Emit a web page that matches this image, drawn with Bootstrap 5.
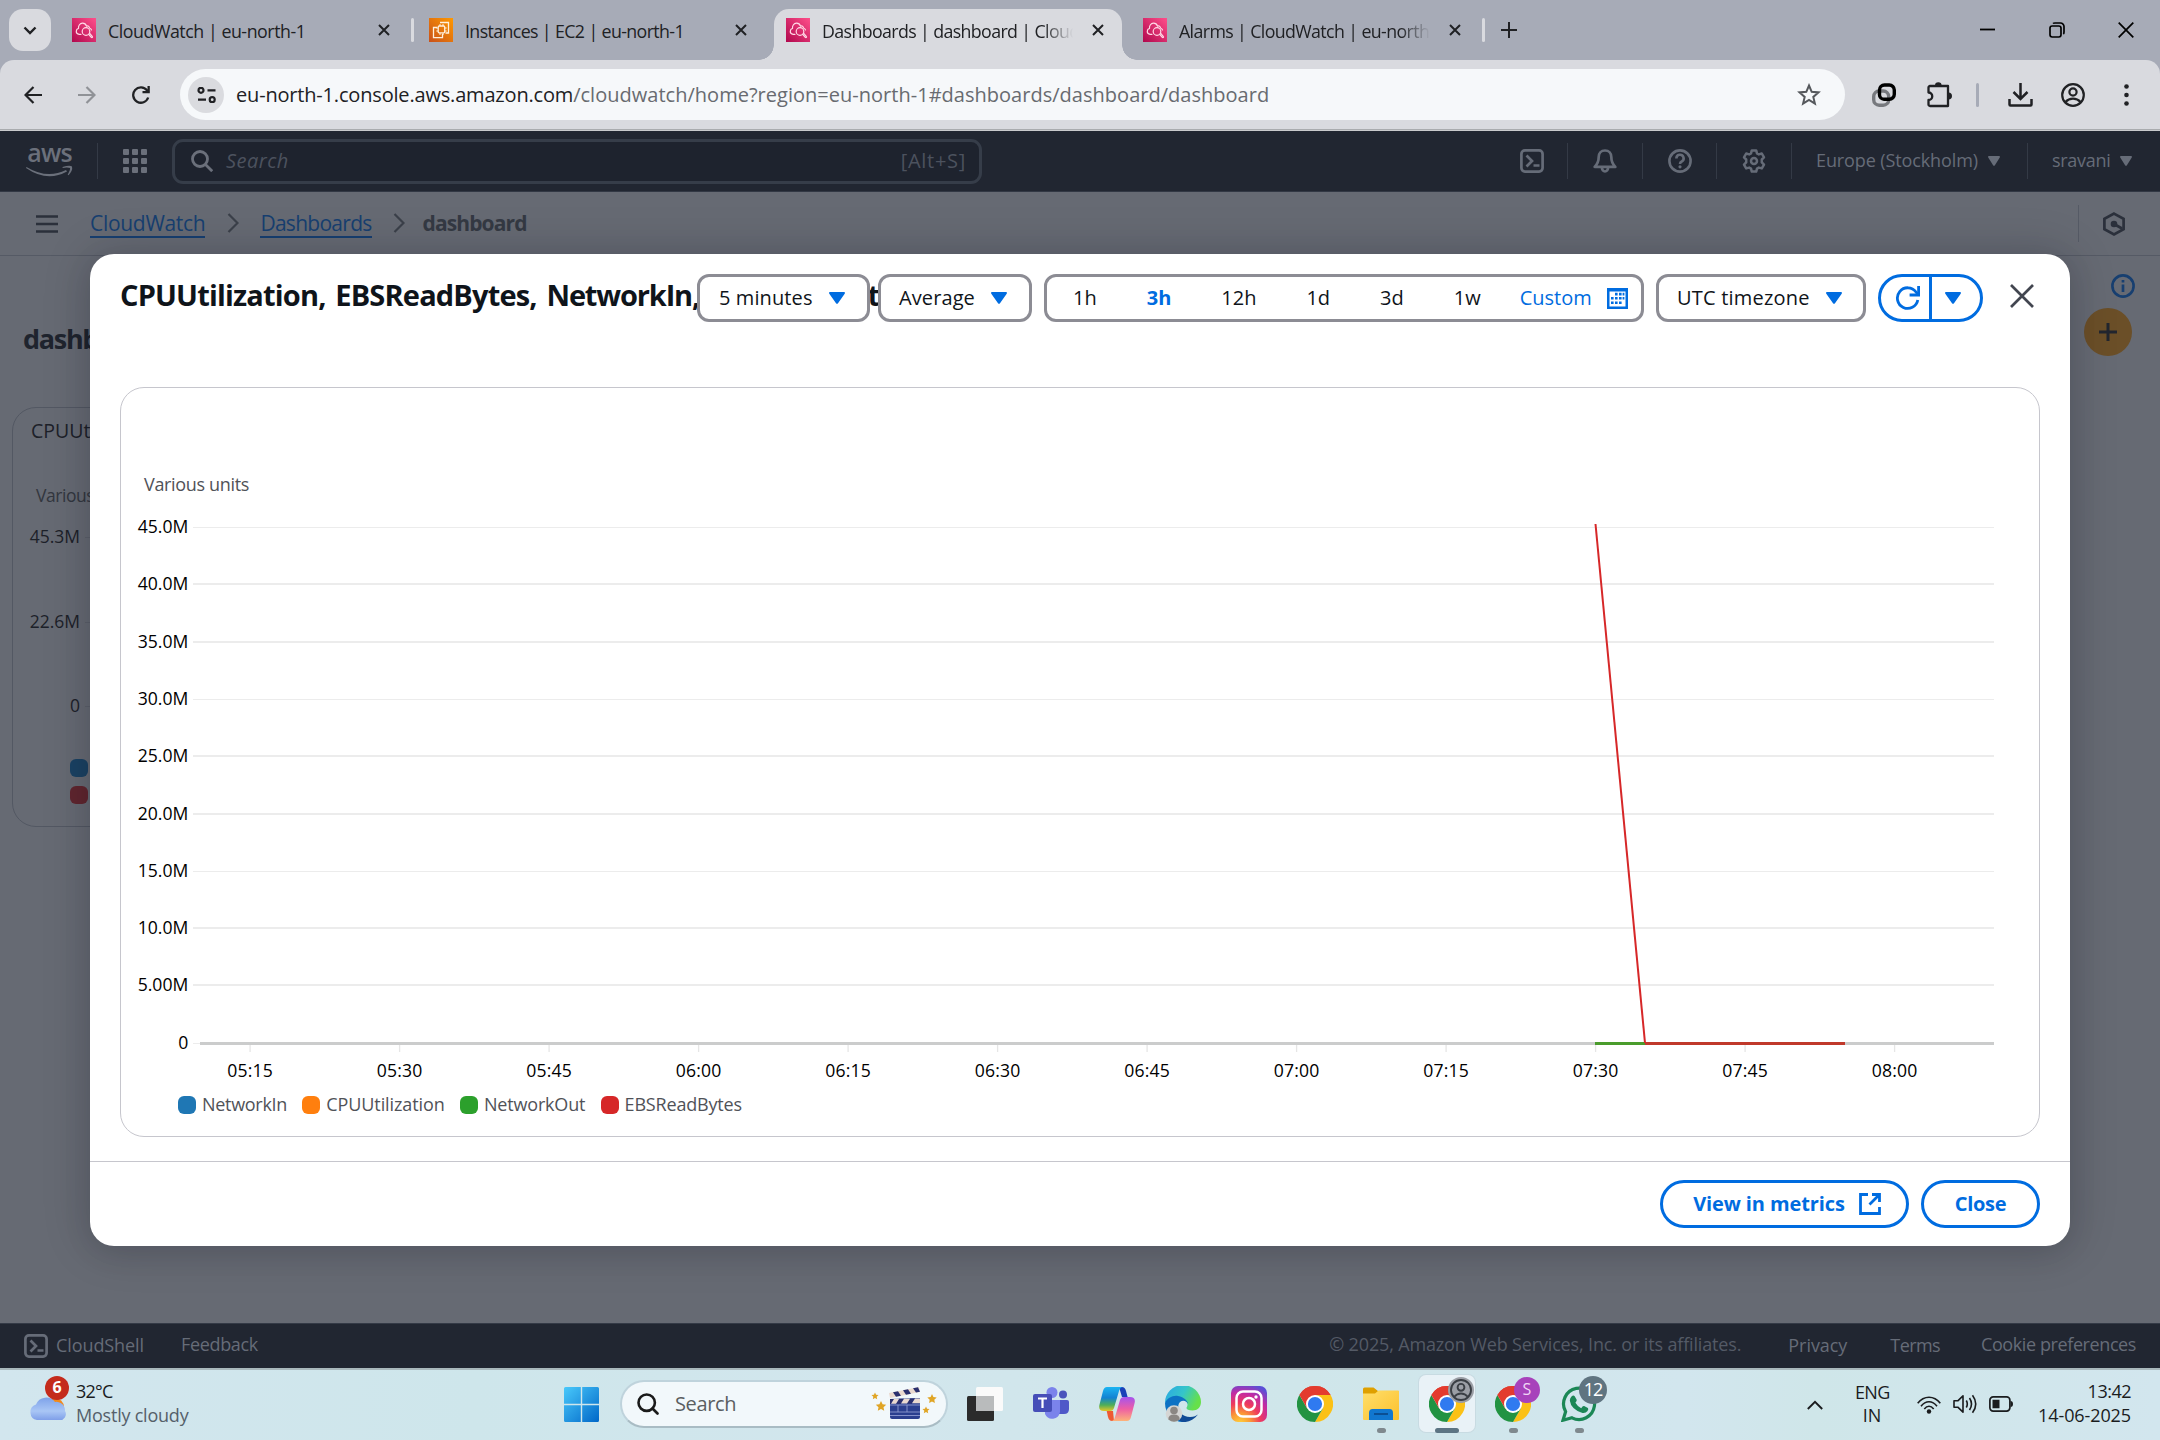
<!DOCTYPE html>
<html lang="en">
<head>
<meta charset="utf-8">
<title>Dashboards | dashboard | CloudWatch</title>
<meta name="viewport" content="width=device-width, initial-scale=1">
<link href="https://cdn.jsdelivr.net/npm/bootstrap@5.3.0/dist/css/bootstrap.min.css" rel="stylesheet">
<style>
body{width:2160px;height:1440px;overflow:hidden;font-family:"Open Sans","Noto Sans",sans-serif;font-size:20px;line-height:1.2;color:#0f141a;background:#666a73}
svg{display:block;flex:none}
.tx{white-space:nowrap;flex:none}
/* browser chrome */
.tabstrip{height:60px;background:#a7abb7;padding-left:9px}
.tab-menu{width:42px;height:42px;border-radius:14px;background:#d9dadf;margin-right:9px}
.tab-item{width:348px;height:51px;padding:0 18px 9px 12px;margin-top:9px;font-size:17.8px;letter-spacing:-.5px;color:#202124;flex:none}
.tab-item.active{background:#d9dadf;border-radius:15px 15px 0 0;position:relative}
.tab-item.active::before,.tab-item.active::after{content:"";position:absolute;bottom:0;width:15px;height:15px}
.tab-item.active::before{left:-15px;background:radial-gradient(circle at 0 0,transparent 14.5px,#d9dadf 15px)}
.tab-item.active::after{right:-15px;background:radial-gradient(circle at 100% 0,transparent 14.5px,#d9dadf 15px)}
.tab-title{width:251px;overflow:hidden;line-height:30px;margin:2px 0 0 12px;padding-right:2px}
.tab-title.fade-end{-webkit-mask-image:linear-gradient(90deg,#000 88%,transparent);mask-image:linear-gradient(90deg,#000 88%,transparent)}
.tab-gap{width:9px;flex:none}
.tab-gap.bar::after{content:"";display:block;width:3px;height:24px;margin-left:3px;border-radius:2px;background:#d9dadf}
.win-btn{width:69px}
.toolbar-row{height:69px;background:linear-gradient(#a7abb7,#a7abb7) top/100% 14px no-repeat}
.toolbar-in{height:69px;background:#d9dadf;border-radius:14px 14px 0 0;padding-left:24px}
.omnibox{width:1665px;height:51px;border-radius:26px;background:#f6f8fa;padding:0 24px 0 8px;color:#202124}
.site-chip{width:36px;height:36px;border-radius:50%;background:#dadbdf;margin-right:12px}
.url-path{color:#686b70}
.chrome-edge{height:2px;background:#c9cacd;border-top:1px solid #a9abae}
/* console header */
.aws-nav{height:61px;background:#212631;border-bottom:1px solid #323844;padding-left:26px;color:#666c78;font-size:18px}
.aws-sep{width:1px;height:36px;background:#343a46;flex:none}
.aws-search{width:810px;height:45px;border:3px solid #363d49;border-radius:11px;background:#1e232e;padding:0 13px 0 16px;font-size:20px;color:#4c525e}
.nav-cell{width:73.6px}
.crumbs{height:64px;border-bottom:1px solid #555a65;padding-left:36px;font-size:21px}
.crumb-link{color:#173f70;border-bottom:2px solid #173f70;line-height:25px;margin-top:1px}
.crumb-now{color:#343943;font-weight:700;letter-spacing:-.89px}
.dash-area{height:1067px;overflow:hidden}
.dash-title{font-size:27px;font-weight:700;color:#1f242e;letter-spacing:-1.3px}
.add-btn{width:48px;height:48px;border-radius:50%;background:#6b4f28}
.widget{width:700px;height:420px;margin:51px 0 0 12px;border:1px solid #535863;border-radius:24px;color:#1d2129}
/* dialog */
.dlg{position:absolute;left:90px;top:254px;width:1980px;height:992px;border-radius:24px;background:#fff;box-shadow:0 0 46px 4px rgba(0,7,22,.16),0 6px 30px rgba(0,7,22,.08)}
.dlg-head{height:133px;padding:21px 31px 0 30px}
.dlg-title{font-size:29px;font-weight:700;letter-spacing:-.83px;word-spacing:3px;line-height:39px}
.dlg-title .tight{letter-spacing:-1.15px}
.dlg-tools{position:absolute;right:36px;top:20px}
.pick{height:48px;border:3px solid #8c8c94;border-radius:12px;background:#fff;padding-left:19px}
.range{width:600px;padding:0 0 0 26px;gap:50px}
.refresh{width:105px;height:48px;border:3px solid #006ce0;border-radius:24px;background:#fff}
.chart-card{margin:0 30px;height:750px;border:1px solid #c6c6cd;border-radius:24px}
.chart-card text{font-family:"Open Sans","Noto Sans",sans-serif;font-size:17.6px;fill:#000}
.legend-row{padding-left:57px;gap:15.3px;font-size:18px;color:#505258;margin-top:2px}
.dot{width:18px;height:18px;border-radius:6px;flex:none;margin-right:6px}
.dlg-foot{margin-top:24px;border-top:1px solid #c6c6cd;padding:18px 30px 0 0;gap:12px}
.pill{height:48px;border:3px solid #006ce0;border-radius:24px;color:#006ce0;font-weight:700;font-size:20px}
/* footer + taskbar */
.aws-foot{height:45px;background:#212631;border-top:1px solid #343a46;padding:0 24px;font-size:18px;color:#666c78}
.taskbar{height:72px;border-top:2px solid #a9b8bc;background:linear-gradient(90deg,#d2e6ee,#cee6eb 22%,#d2e6ed 40%,#cfe6ea 60%,#d2e6ee 78%,#cfe6e9 84%,#d2e6ee);font-size:18px;color:#1a1c1e}
.weather{width:564px;padding-left:29px}
.tb-search{width:328px;height:48px;border-radius:24px;background:#f2f8fb;border:2px solid #bfd3dc;border-bottom-color:#a9bcc4;margin-left:21px;padding:0 9px 0 15px;font-size:20px;color:#5a5e61}
.app{width:66px;height:70px;position:relative;padding-bottom:2px}
.run::after{content:"";position:absolute;left:28.5px;bottom:7px;width:9px;height:5px;border-radius:3px;background:#7f898e}
.app.on::before{content:"";position:absolute;left:5px;top:5px;width:56px;height:57px;border-radius:7px;background:#e9f2f7;box-shadow:0 0 0 1px #c8dbe2}
.app.on::after{left:21px;width:24px;background:#5c7483}
.app svg{position:relative}
.tag{position:absolute;width:26px;height:26px;border-radius:50%;left:34px;top:7px;font-size:16px}
.two-line{line-height:24px;padding-bottom:5px}
</style>
<script src="https://cdn.jsdelivr.net/npm/bootstrap@5.3.0/dist/js/bootstrap.bundle.min.js"></script>
</head>
<body class="d-flex flex-column">
<svg width="0" height="0" class="position-absolute">
<defs>
<linearGradient id="gPink" x1="0" y1="1" x2="1" y2="0"><stop stop-color="#b0084d"/><stop offset="1" stop-color="#ff4f8b"/></linearGradient>
<linearGradient id="gOr" x1="0" y1="1" x2="1" y2="0"><stop stop-color="#c8511b"/><stop offset="1" stop-color="#f90"/></linearGradient>
<symbol id="cw" viewBox="0 0 24 24"><path fill="url(#gPink)" d="M0 0h24v24H0z"/><g fill="none" stroke="#ffd9e6" stroke-width="1.2" stroke-linecap="round"><path d="M9 16.3H7.2c-2-.3-3-1.700-2.900-3.100 0-1.500 1-2.500 2.200-2.800-.3-3 1.500-5 3.900-5.200 2-.1 3.400 1 4.100 2.900 1.600-.6 2.800.3 3 1.900 1 .3 1.700 1 2 2"/><circle cx="14" cy="13.500" r="3.800"/><path d="M16.700 16.300l2.600 3.100c.8.800 1.700-.3 1-1l-2.600-3"/></g></symbol>
<symbol id="x" viewBox="0 0 12 12"><path d="M1 1l10 10M11 1L1 11" stroke="currentColor" stroke-width="2" fill="none"/></symbol>
<symbol id="tri" viewBox="0 0 16 12"><path d="M1.200 0h13.600c1 0 1.500.9.900 1.700L9 11.300c-.5.7-1.500.7-2 0L.3 1.700C-.3.900.2 0 1.200 0z" fill="currentColor"/></symbol>
<symbol id="shell" viewBox="0 0 24 24"><g fill="none" stroke="currentColor" stroke-width="2.700"><rect x="1.400" y="1.400" width="21.200" height="21.200" rx="3.500"/><path d="M6.500 6.500l5.500 5.500-5.500 5.500M13.500 16.500h6"/></g></symbol>
<symbol id="chr" viewBox="0 0 36 36"><path d="M18 18L2.410 9A18 18 0 0 1 33.590 9z" fill="#e33b2e"/><path d="M18 9H33.590A18 18 0 0 1 18 36L25.800 22.500z" fill="#fbc116"/><path d="M2.410 9L10.200 22.500 25.800 22.500 18 36A18 18 0 0 1 2.410 9z" fill="#229342"/><path d="M2.410 9A18 18 0 0 1 33.590 9H18L10.200 22.500z" fill="#e33b2e"/><circle cx="18" cy="18" r="9" fill="#fff"/><circle cx="18" cy="18" r="7.100" fill="#2f7af0"/></symbol>
</defs></svg>

<!-- Tab strip -->
<div class="tabstrip d-flex align-items-center flex-shrink-0">
  <div class="tab-menu d-flex align-items-center justify-content-center"><svg width="14" height="9" viewBox="0 0 14 9"><path d="M1.500 1.500L7 7l5.500-5.500" fill="none" stroke="#202124" stroke-width="2.400"/></svg></div>
  <div class="tab-item d-flex align-items-center"><svg width="24" height="24"><use href="#cw"/></svg><div class="tab-title tx" style="letter-spacing:-.45px">CloudWatch | eu-north-1</div><svg class="ms-auto" width="12" height="12"><use href="#x"/></svg></div>
  <div class="tab-gap bar"></div>
  <div class="tab-item d-flex align-items-center"><svg width="24" height="24" viewBox="0 0 24 24"><path fill="url(#gOr)" d="M0 0h24v24H0z"/><g fill="none" stroke="#fff1de" stroke-width="1.300"><path d="M11 4.500h8.500V15h-3M8 9.500H4.500v10.200h9V16"/><rect x="9.200" y="8" width="6.500" height="6.800" rx="1"/><path d="M11 6v2M14 6v2M11 15v2M14 15v2M7.300 10h2M7.300 13h2M15.700 10h2M15.700 13h2" stroke-width="1"/></g></svg><div class="tab-title tx" style="letter-spacing:-.62px">Instances | EC2 | eu-north-1</div><svg class="ms-auto" width="12" height="12"><use href="#x"/></svg></div>
  <div class="tab-gap"></div>
  <div class="tab-item active d-flex align-items-center"><svg width="24" height="24"><use href="#cw"/></svg><div class="tab-title tx fade-end" style="letter-spacing:-.62px">Dashboards | dashboard | CloudW</div><svg class="ms-auto" width="12" height="12"><use href="#x"/></svg></div>
  <div class="tab-gap"></div>
  <div class="tab-item d-flex align-items-center"><svg width="24" height="24"><use href="#cw"/></svg><div class="tab-title tx fade-end" style="letter-spacing:-.62px">Alarms | CloudWatch | eu-north-1</div><svg class="ms-auto" width="12" height="12"><use href="#x"/></svg></div>
  <div class="tab-gap bar"></div>
  <svg style="margin-left:13px" width="16" height="16" viewBox="0 0 16 16"><path d="M8 0v16M0 8h16" stroke="#202124" stroke-width="2"/></svg>
  <div class="d-flex ms-auto text-black">
    <div class="win-btn d-flex justify-content-center align-items-center"><svg width="15" height="16" viewBox="0 0 15 16"><path d="M0 7.500h15" stroke="#000" stroke-width="1.800"/></svg></div>
    <div class="win-btn d-flex justify-content-center align-items-center"><svg width="16" height="16" viewBox="0 0 16 16"><g fill="none" stroke="#000" stroke-width="1.700"><rect x="1" y="4" width="11" height="11" rx="2.200"/><path d="M4 1.500Q4.500 1 6 1h5.500A3.500 3.500 0 0 1 15 4.500V10q0 1.500-.7 2"/></g></svg></div>
    <div class="win-btn d-flex justify-content-center align-items-center"><svg width="16" height="16" viewBox="0 0 16 16"><path d="M.7.7l14.600 14.600M15.300.7L.7 15.300" stroke="#000" stroke-width="1.700"/></svg></div>
  </div>
</div>

<!-- Toolbar -->
<div class="toolbar-row flex-shrink-0"><div class="toolbar-in d-flex align-items-center">
  <svg width="18" height="18" viewBox="0 0 18 18"><path d="M18 9H2M9.500 1L1.500 9l8 8" fill="none" stroke="#202124" stroke-width="2.200"/></svg>
  <svg style="margin-left:36px" width="18" height="18" viewBox="0 0 18 18"><path d="M0 9h16M8.500 1l8 8-8 8" fill="none" stroke="#909297" stroke-width="2.200"/></svg>
  <svg style="margin-left:36px" width="18" height="18" viewBox="0 0 18 18"><path d="M16.200 11.500A7.700 7.700 0 1 1 15 4.300l1.500 1.900" fill="none" stroke="#202124" stroke-width="2.300"/><path d="M17.800 0v7.300h-7.300V5h5V0z" fill="#202124"/></svg>
  <div class="omnibox d-flex align-items-center" style="margin-left:30px">
    <div class="site-chip d-flex align-items-center justify-content-center"><svg width="19" height="16" viewBox="0 0 19 16"><g fill="none" stroke="#202124" stroke-width="2.200"><circle cx="4" cy="3.300" r="2.500"/><path d="M10.500 3.300h8M1 12.700h8"/><circle cx="15.200" cy="12.700" r="2.500"/></g></svg></div>
    <span class="tx" style="letter-spacing:-.18px">eu-north-1.console.aws.amazon.com</span><span class="tx url-path" style="letter-spacing:.02px">/cloudwatch/home?region=eu-north-1#dashboards/dashboard/dashboard</span>
    <svg class="ms-auto" width="24" height="23" viewBox="0 0 24 23"><path d="M12 2.500l2.700 6.300 6.800.6-5.200 4.500 1.600 6.700-5.900-3.600-5.900 3.600 1.600-6.700L2.500 9.400l6.800-.6z" fill="none" stroke="#55585c" stroke-width="2"/></svg>
  </div>
  <svg style="margin-left:27px" width="24" height="24" viewBox="0 0 24 24"><g fill="none" stroke-width="3.400"><rect x="1.700" y="8" width="15" height="14.200" rx="5.500" stroke="#77797e"/><path d="M13 16.200H12a4.500 4.500 0 0 1-4.500-4.500V7A5 5 0 0 1 12.500 2H17.300A5 5 0 0 1 22.300 7V11.200a5 5 0 0 1-5 5H12.500" stroke="#000"/></g></svg>
  <svg style="margin-left:31px" width="26" height="26" viewBox="0 0 26 26"><path d="M3 4h18v20H3a1.500 1.500 0 0 1-1.500-1.500V18a3.600 3.600 0 0 0 0-7.500V5.500A1.500 1.500 0 0 1 3 4z" fill="none" stroke="#202124" stroke-width="2.300" stroke-linejoin="round"/><path d="M8 3.500a3.300 3.300 0 0 1 6.600 0zM21.500 10.500a3.500 3.500 0 0 1 0 7z" fill="#202124"/></svg>
  <div style="width:3px;height:24px;background:#a7abb7;margin:0 29px 0 23px;border-radius:2px"></div>
  <svg width="25" height="24" viewBox="0 0 25 24"><path d="M12.500 0v15M5.500 9l7 7 7-7M1.500 16v5.500q0 1 1 1h20q1 0 1-1V16" fill="none" stroke="#202124" stroke-width="2.500"/></svg>
  <svg style="margin-left:28px" width="24" height="24" viewBox="0 0 24 24"><g fill="none" stroke="#202124" stroke-width="2.200"><circle cx="12" cy="12" r="10.800"/><circle cx="12" cy="9" r="3.600"/><path d="M4.500 19q3-3.300 7.500-3.300t7.500 3.300"/></g></svg>
  <svg style="margin-left:39px" width="5" height="22" viewBox="0 0 5 22"><g fill="#202124"><circle cx="2.500" cy="2.500" r="2.300"/><circle cx="2.500" cy="11" r="2.300"/><circle cx="2.500" cy="19.500" r="2.300"/></g></svg>
</div></div>
<div class="chrome-edge flex-shrink-0"></div>

<!-- Console navigation -->
<div class="aws-nav d-flex align-items-center flex-shrink-0">
  <div style="width:47px" class="d-flex flex-column align-items-center">
    <span class="tx" style="font-size:25px;line-height:18px;letter-spacing:-.9px;font-weight:600;color:#6b707b;margin-top:-2px">aws</span>
    <svg width="47" height="13" viewBox="0 0 47 13" style="margin-top:3px"><path d="M.5 3Q21 15.500 40 6l1 1.500Q21 18.500 0 4z" fill="#6b707b"/><path d="M36.500 3Q44 .8 46 2.500 47 6.500 42.500 11.200l-.8-.5Q44.500 5.500 44 4 41 3 36.700 4z" fill="#6b707b"/></svg>
  </div>
  <div class="aws-sep" style="margin:0 25px 0 24px"></div>
  <svg width="24" height="24" viewBox="0 0 24 24"><g fill="#6b707b"><rect width="6" height="6" rx="1"/><rect x="9" width="6" height="6" rx="1"/><rect x="18" width="6" height="6" rx="1"/><rect y="9" width="6" height="6" rx="1"/><rect x="9" y="9" width="6" height="6" rx="1"/><rect x="18" y="9" width="6" height="6" rx="1"/><rect y="18" width="6" height="6" rx="1"/><rect x="9" y="18" width="6" height="6" rx="1"/><rect x="18" y="18" width="6" height="6" rx="1"/></g></svg>
  <div class="aws-search d-flex align-items-center" style="margin-left:25px">
    <svg width="22" height="22" viewBox="0 0 22 22"><g fill="none" stroke="#6b707b" stroke-width="2.800"><circle cx="9" cy="9" r="7.500"/><path d="M14.200 14.200l7 7"/></g></svg>
    <span class="tx fst-italic" style="margin-left:13px;letter-spacing:.5px">Search</span>
    <span class="tx ms-auto" style="letter-spacing:.7px">[Alt+S]</span>
  </div>
  <div class="d-flex align-items-center ms-auto">
    <div class="nav-cell d-flex justify-content-center ps-1"><svg width="24" height="24"><use href="#shell"/></svg></div>
    <div class="aws-sep"></div>
    <div class="nav-cell d-flex justify-content-center"><svg width="24" height="24" viewBox="0 0 24 24"><g fill="none" stroke="currentColor" stroke-width="2.700"><path d="M12 1.500c-4 0-6.300 2.800-6.300 6.500 0 5-1.700 7.500-4 9.900h20.600c-2.300-2.400-4-4.900-4-9.900 0-3.700-2.300-6.500-6.300-6.500z" stroke-linejoin="round"/><path d="M9 19a3 3.500 0 0 0 6 0"/></g></svg></div>
    <div class="aws-sep"></div>
    <div class="nav-cell d-flex justify-content-center"><svg width="24" height="24" viewBox="0 0 24 24"><g fill="none" stroke="currentColor" stroke-width="2.600"><circle cx="12" cy="12" r="10.600"/><path d="M8.400 9.500A3.600 3.600 0 1 1 13.700 12.500Q12 13.300 12 15"/></g><circle cx="12" cy="17.800" r="1.600" fill="currentColor"/></svg></div>
    <div class="aws-sep"></div>
    <div class="nav-cell d-flex justify-content-center"><svg width="24" height="24" viewBox="0 0 24 24"><g fill="none" stroke="currentColor" stroke-width="2.500" stroke-linejoin="round"><path d="M9.800 1.400h4.400l.8 3 1.800 1 3-.9 2.200 3.900-2.200 2.100v2.900l2.200 2.200-2.200 3.800-3-.8-1.800 1-.8 3H9.800l-.8-3-1.800-1-3 .8L2 15.600l2.200-2.200v-2.900L2 8.400l2.200-3.900 3 .9 1.800-1z"/><circle cx="12" cy="12" r="3"/></g></svg></div>
    <div class="aws-sep"></div>
    <div class="d-flex align-items-center" style="width:235px;padding-left:24px"><span class="tx" style="letter-spacing:-.11px">Europe (Stockholm)</span><svg style="margin-left:10px" width="12" height="10" viewBox="0 0 16 12" preserveAspectRatio="none"><use href="#tri" width="16" height="12"/></svg></div>
    <div class="aws-sep"></div>
    <div class="d-flex align-items-center" style="width:132px;padding-left:24px"><span class="tx" style="letter-spacing:-.3px">sravani</span><svg style="margin-left:10px" width="12" height="10" viewBox="0 0 16 12" preserveAspectRatio="none"><use href="#tri" width="16" height="12"/></svg></div>
  </div>
</div>

<!-- Breadcrumbs -->
<div class="crumbs d-flex align-items-center flex-shrink-0">
  <svg width="22" height="18" viewBox="0 0 22 18"><path d="M0 1.500h22M0 9h22M0 16.500h22" stroke="#2b303b" stroke-width="2.700"/></svg>
  <span class="tx crumb-link" style="margin-left:32px;letter-spacing:-.3px">CloudWatch</span>
  <svg style="margin:0 0 2px 22px" width="12" height="20" viewBox="0 0 12 20"><path d="M1.500 1l9 9-9 9" fill="none" stroke="#3b404a" stroke-width="2.200"/></svg>
  <span class="tx crumb-link" style="margin-left:21px;letter-spacing:-.72px">Dashboards</span>
  <svg style="margin:0 0 2px 21px" width="12" height="20" viewBox="0 0 12 20"><path d="M1.500 1l9 9-9 9" fill="none" stroke="#3b404a" stroke-width="2.200"/></svg>
  <span class="tx crumb-now" style="margin-left:18px">dashboard</span>
  <div class="ms-auto" style="width:1px;height:37px;background:#555a65"></div>
  <svg style="margin:0 35px 0 24px" width="22" height="24" viewBox="0 0 22 24"><path d="M11 1.600l9.600 5.200v10.400L11 22.400 1.400 17.200V6.800z" fill="none" stroke="#2b303b" stroke-width="2.700"/><circle cx="11" cy="12" r="3.300" fill="#2b303b"/><path d="M11 12l8 4.500" stroke="#2b303b" stroke-width="2.700"/></svg>
</div>

<!-- Dashboard page behind the dialog -->
<div class="dash-area flex-shrink-0">
  <div class="d-flex justify-content-end" style="padding:18px 25px 0 0"><svg width="24" height="24" viewBox="0 0 24 24"><circle cx="12" cy="12" r="10.600" fill="none" stroke="#173f70" stroke-width="2.600"/><path d="M12 10.500v7.500M12 6v2.600" stroke="#173f70" stroke-width="2.700"/></svg></div>
  <div class="d-flex align-items-center justify-content-between" style="padding:0 28px 0 23px;margin-top:10px;height:48px">
    <span class="tx dash-title" style="padding-top:14px">dashboard</span>
    <div class="add-btn d-flex align-items-center justify-content-center"><svg width="18" height="18" viewBox="0 0 18 18"><path d="M9 0v18M0 9h18" stroke="#22262f" stroke-width="3"/></svg></div>
  </div>
  <div class="widget">
    <svg width="690" height="410" viewBox="13 408 690 410" font-family="Open Sans, Noto Sans, sans-serif" font-size="17.5" fill="#1d2129">
      <text x="31" y="438" font-size="19.500">CPUUtilization</text>
      <text x="36" y="502" fill="#33373f" letter-spacing="-.45">Various units</text>
      <g text-anchor="end"><text x="80" y="542.500">45.3M</text><text x="80" y="627.500">22.6M</text><text x="80" y="711.500">0</text></g>
      <path d="M85 537.500H690M85 622.500H690M85 706.500H690" stroke="#5c606a"/>
      <rect x="70" y="759" width="18" height="18" rx="6" fill="#1b4263"/><rect x="70" y="786" width="18" height="18" rx="6" fill="#60262f"/>
    </svg>
  </div>
</div>

<!-- Console footer -->
<div class="aws-foot d-flex align-items-center flex-shrink-0">
  <svg width="24" height="24"><use href="#shell"/></svg><span class="tx ms-2" style="letter-spacing:-.09px">CloudShell</span>
  <span class="tx" style="margin-left:37px;letter-spacing:-.33px;padding-bottom:2px">Feedback</span>
  <span class="tx ms-auto" style="letter-spacing:-.15px;padding-bottom:2px;color:#545a66">© 2025, Amazon Web Services, Inc. or its affiliates.</span>
  <span class="tx" style="margin-left:47px;letter-spacing:-.05px">Privacy</span>
  <span class="tx" style="margin-left:43px;letter-spacing:-.6px">Terms</span>
  <span class="tx" style="margin-left:41px;letter-spacing:-.4px;padding-bottom:2px">Cookie preferences</span>
</div>

<!-- Taskbar -->
<div class="taskbar d-flex align-items-center flex-shrink-0">
  <div class="weather d-flex align-items-center position-relative">
    <svg width="44" height="48" viewBox="0 0 44 48"><defs><linearGradient id="gCl" x1="0" y1="0" x2="0" y2="1"><stop stop-color="#7ea2ea"/><stop offset=".6" stop-color="#a9c6f5"/><stop offset="1" stop-color="#7f9fe8"/></linearGradient></defs><circle cx="26" cy="26" r="9" fill="#f28a1a"/><path d="M8 39a8 8 0 0 1-1-15.500A11 11 0 0 1 26 21a8.500 8.500 0 0 1 10 9 6 6 0 0 1-6 9z" fill="url(#gCl)"/></svg>
    <span class="tag d-flex align-items-center justify-content-center text-white fw-bold" style="left:45px;top:-3px;width:24px;height:24px;background:#c42b1c">6</span>
    <div class="two-line" style="margin-left:3px"><div class="tx" style="letter-spacing:-.8px">32°C</div><div class="tx" style="letter-spacing:-.22px;color:#55606a">Mostly cloudy</div></div>
  </div>
  <svg width="35" height="35" viewBox="0 0 35 35" style="margin-bottom:1px"><defs><linearGradient id="gW" x1="0" y1="0" x2="1" y2="1"><stop stop-color="#49c9fb"/><stop offset="1" stop-color="#0067c8"/></linearGradient></defs><path fill="url(#gW)" d="M1.500 0H16.800V16.800H0V1.500Q0 0 1.500 0zM18.200 0H33.500Q35 0 35 1.500V16.800H18.200zM0 18.200H16.800V35H1.500Q0 35 0 33.500zM18.200 18.200H35V33.500Q35 35 33.500 35H18.200z"/></svg>
  <div class="tb-search d-flex align-items-center" style="margin-bottom:2px">
    <svg width="22" height="22" viewBox="0 0 22 22"><g fill="none" stroke="#1a1a1a" stroke-width="2.600" stroke-linecap="round"><circle cx="9.700" cy="9.700" r="8.200"/><path d="M15.500 15.500l5 5"/></g></svg>
    <span class="tx" style="margin-left:16px;letter-spacing:-.35px">Search</span>
    <svg class="ms-auto" width="66" height="34" viewBox="872 1388 66 34"><path d="M891 1400l30-1v19q0 2-2 2h-26q-2 0-2-2z" fill="#2b3f8f"/><path d="M891 1406h30M891 1413h30M891 1416.500h30M899 1406v7M908 1406v7" stroke="#8e9bd0" fill="none" stroke-width=".9"/><path d="M890 1394l30-6 1 5-30 6z" fill="#ead9cf"/><path d="M894 1393.200l5-1 3 4.600-5 1zM904 1391.200l5-1 3 4.600-5 1zM914 1389.200l5-1 2 4.600-4 .8zM891 1400h4l-3 5h-1zM900 1399.700h5l-3 5h-5zM911 1399.400h5l-3 5h-5z" fill="#2a2f6e"/><path d="M895 1400h5l-3 4.800h-5zM905 1399.700h6l-3 4.800h-6zM916 1399.400h5v4.800h-8z" fill="#ead9cf"/><g fill="#e0a526"><path d="M882 1402l1.600 3.300 3.600.4-2.700 2.500.7 3.600-3.200-1.800-3.200 1.800.7-3.600-2.700-2.500 3.600-.4z"/><path d="M876 1393.500l1.100 2.300 2.400.3-1.800 1.700.5 2.500-2.200-1.200-2.200 1.200.5-2.500-1.800-1.700 2.400-.3z"/><path d="M933 1395l1.400 3 3.300.4-2.400 2.300.6 3.300-2.900-1.600-2.900 1.600.6-3.300-2.400-2.300 3.300-.4z"/><path d="M927 1407.500l1.100 2.300 2.400.3-1.800 1.700.5 2.500-2.200-1.200-2.200 1.200.5-2.500-1.800-1.700 2.400-.3z"/></g></svg>
  </div>
  <div class="d-flex" style="margin-left:4px">
    <div class="app d-flex align-items-center justify-content-center"><svg width="36" height="34" viewBox="0 0 36 34"><rect y="9" width="27" height="25" rx="1.500" fill="#2b2b2b"/><rect x="9" width="27" height="24" rx="1.500" fill="#fafafa"/><path d="M9 9h18v15H9z" fill="#b9bbbc"/></svg></div>
    <div class="app d-flex align-items-center justify-content-center"><svg width="36" height="34" viewBox="0 0 36 34"><circle cx="30" cy="7.500" r="4" fill="#4b53bc"/><path d="M24 13h10q2 0 2 2v7q0 5-5 5h-7z" fill="#4f58c8"/><circle cx="19" cy="5.500" r="5.500" fill="#7b83eb"/><path d="M12 13h15v12a8 8.500 0 0 1-15 2z" fill="#7b83eb"/><rect y="7" width="19" height="18" rx="2" fill="#464eb8"/><path d="M5 11.500h9M9.500 11.500v9.500" stroke="#fff" stroke-width="2.200"/></svg></div>
    <div class="app d-flex align-items-center justify-content-center"><svg width="36" height="34" viewBox="0 0 36 34"><defs><linearGradient id="c1" x1="0" y1="0" x2="0" y2="1"><stop stop-color="#1bb4f2"/><stop offset=".45" stop-color="#1283d2"/><stop offset=".75" stop-color="#4fae58"/><stop offset="1" stop-color="#e3c628"/></linearGradient><linearGradient id="c2" x1="0" y1="0" x2="0" y2="1"><stop stop-color="#a553ee"/><stop offset=".5" stop-color="#ee5fa4"/><stop offset="1" stop-color="#fdb37a"/></linearGradient></defs><path d="M20 0h3q3 0 4 4l1.600 6H23z" fill="#1a42b8"/><path d="M15 34h-2q-3 0-4-4l-1.300-6H14z" fill="#ee5a33"/><path d="M8 0h16q-3 0-4 4l-5 17q-1 3-4 3H5q-6 0-4.600-6L4 4Q5 0 8 0z" fill="url(#c1)"/><path d="M28 34H12q3 0 4-4l5-17q1-3 4-3h6q6 0 4.600 6L32 30q-1 4-4 4z" fill="url(#c2)"/></svg></div>
    <div class="app d-flex align-items-center justify-content-center"><svg width="36" height="36" viewBox="0 0 36 36"><defs><linearGradient id="e1" x1="0" y1="0" x2="1" y2=".4"><stop stop-color="#2aa7e6"/><stop offset=".55" stop-color="#35c5c9"/><stop offset="1" stop-color="#66e04a"/></linearGradient></defs><path d="M0 17A18 17.500 0 0 1 36 16c0 5-3.500 8.500-8.500 8.500-4 0-6-1-6-2.500 0-1 1-1.500 1-3.500 0-3.500-4-7-9.500-7S2 13.500 0 17z" fill="url(#e1)"/><path d="M0 17c2-5 8-8 13-7 6 1 10 5 10 8-1-3-5-4.500-8-2-4 4-1 13 7 16-1 2-4 4-4 4C8 36 0 28 0 17z" fill="#0d72c4"/><path d="M13 19c-1 6 4 12 12 12 4 0 6.500-1.500 8-2.500C29 34 23 36.500 18 36c-6-1-10-10-5-17z" fill="#104a96"/><circle cx="9" cy="27.500" r="8.300" fill="#d5d5d3"/><circle cx="9" cy="24.500" r="3.800" fill="#8b8783"/><path d="M3.300 33.500q0-5 5.700-5t5.700 5Q9 38 3.300 33.500z" fill="#8b8783"/></svg></div>
    <div class="app d-flex align-items-center justify-content-center"><svg width="36" height="36" viewBox="0 0 36 36"><defs><radialGradient id="i1" cx=".25" cy="1.050" r="1.150"><stop stop-color="#ffd43a"/><stop offset=".25" stop-color="#fb9a35"/><stop offset=".5" stop-color="#ef3a5c"/><stop offset=".75" stop-color="#c32aa3"/><stop offset="1" stop-color="#5b4fd6"/></radialGradient></defs><rect width="36" height="36" rx="7" fill="url(#i1)"/><g fill="none" stroke="#fff" stroke-width="2.500"><rect x="5.500" y="5.500" width="25" height="25" rx="6.500"/><circle cx="18" cy="18" r="6"/></g><circle cx="25" cy="11" r="1.700" fill="#fff"/></svg></div>
    <div class="app d-flex align-items-center justify-content-center"><svg width="36" height="36"><use href="#chr"/></svg></div>
    <div class="app run d-flex align-items-center justify-content-center"><svg width="36" height="34" viewBox="0 0 36 34"><defs><linearGradient id="f1" x1="0" y1="0" x2="1" y2="1"><stop stop-color="#ffdf6b"/><stop offset="1" stop-color="#fcc02c"/></linearGradient></defs><path d="M0 2q0-1.500 1.500-1.500h9L15 4h20q1 0 1 1v5H0z" fill="#dfa000"/><path d="M0 6.500h12L15.500 3.500H35q1 0 1 1V32q0 1-1 1H1q-1 0-1-1z" fill="url(#f1)"/><path d="M6 33V26q0-4 3.500-4h17q3.500 0 3.500 4v7z" fill="#1177cf"/><path d="M11 27h14" stroke="#0b4f93" stroke-width="2"/></svg></div>
    <div class="app run on d-flex align-items-center justify-content-center"><svg width="36" height="36"><use href="#chr"/></svg><span class="tag" style="background:#9b9ea5"><svg width="26" height="26" viewBox="0 0 26 26"><g fill="none" stroke="#3a3e44" stroke-width="1.900"><circle cx="13" cy="13" r="10"/><circle cx="13" cy="10.300" r="3.400"/><path d="M6 20q3-3.500 7-3.500t7 3.500"/></g></svg></span></div>
    <div class="app run d-flex align-items-center justify-content-center"><svg width="36" height="36"><use href="#chr"/></svg><span class="tag d-flex align-items-center justify-content-center" style="background:#a742bb;color:#f0d4f5">S</span></div>
    <div class="app run d-flex align-items-center justify-content-center"><svg width="36" height="36" viewBox="0 0 36 36"><path d="M2 34.200l2.600-8.600A15.500 15.700 0 1 1 11 31.800z" fill="none" stroke="#1b8755" stroke-width="3.200"/><path d="M10.500 10.500q1.800-1.800 3.200-.3l2 3.600q.4 1-1.300 2.900 2.400 4 5.800 5.500 1.700-2.600 2.900-2.100l3.800 2q1 .8-.4 3-1.700 2.300-5 1.900Q10 23.500 8.800 14.500q.2-2.400 1.700-4z" fill="#1b8755"/></svg><span class="tag d-flex align-items-center justify-content-center text-white" style="width:28px;height:28px;left:33px;top:6px;font-size:18px;letter-spacing:-1px;background:#5f7480">12</span></div>
  </div>
  <div class="d-flex align-items-center ms-auto" style="padding-right:29px">
    <svg width="16" height="10" viewBox="0 0 16 10"><path d="M.8 9L8 1.800 15.200 9" fill="none" stroke="#1a1c1e" stroke-width="1.900"/></svg>
    <div class="text-center" style="width:34px;margin:0 28px 2px 32px;line-height:23px"><div class="tx" style="letter-spacing:-.7px">ENG</div><div class="tx">IN</div></div>
    <svg width="24" height="18" viewBox="0 0 24 18"><g fill="none" stroke="#1a1c1e" stroke-width="1.600"><path d="M.7 7.200Q5.500 1.200 12 1.200t11.300 6M4 10.200Q7.500 5.800 12 5.800t8 4.400M7.300 13Q9.500 10.200 12 10.200t4.700 2.800"/></g><circle cx="12" cy="15.500" r="2.200" fill="#1a1c1e"/></svg>
    <svg style="margin:0 12px 2px" width="24" height="20" viewBox="0 0 24 20"><g fill="none" stroke="#1a1c1e" stroke-width="1.600" stroke-linejoin="round"><path d="M1 6.800h3.800L10 1.800v16.400L4.800 13.200H1z"/><path d="M13.300 6.500q2 3.500 0 7M16.500 4q4 6 0 12M19.500 1.200q6.500 8.800 0 17.600"/></g></svg>
    <svg style="margin-bottom:2px" width="24" height="16" viewBox="0 0 24 16"><rect x=".9" y=".9" width="20" height="14.200" rx="3.300" fill="none" stroke="#1a1c1e" stroke-width="1.700"/><path d="M3.500 3.700h7v8.600h-7zM21.500 5q2.500 0 2.500 3t-2.500 3z" fill="#1a1c1e"/></svg>
    <div class="text-end two-line" style="width:118px"><div class="tx" style="letter-spacing:-.5px">13:42</div><div class="tx" style="letter-spacing:-.1px">14-06-2025</div></div>
  </div>
</div>

<!-- Metric dialog -->
<div class="dlg">
  <div class="dlg-head">
    <div class="dlg-title tx">CPUUtilization, EBSReadBytes, <span class="tight">NetworkIn, NetworkOut</span></div>
    <div class="dlg-tools d-flex align-items-center">
      <div class="pick d-flex align-items-center tx" style="width:173px;letter-spacing:.1px">5 minutes<svg style="margin-left:16px;color:#006ce0" width="16" height="12"><use href="#tri"/></svg></div>
      <div class="pick d-flex align-items-center tx" style="width:154px;margin-left:8px;padding-left:18px;letter-spacing:.1px">Average<svg style="margin-left:16px;color:#006ce0" width="16" height="12"><use href="#tri"/></svg></div>
      <div class="pick range d-flex align-items-center tx" style="margin-left:12px"><span>1h</span><span class="fw-bold" style="color:#006ce0">3h</span><span>12h</span><span>1d</span><span>3d</span><span>1w</span>
        <span class="d-flex align-items-center" style="color:#006ce0;gap:15px;margin-left:-11px">Custom<svg width="21" height="21" viewBox="0 0 21 21"><path fill="#006ce0" d="M0 0h21v21H0z"/><path fill="#fff" d="M2.500 3.500h16v15h-16z"/><path d="M8 4.800h2.600v2.600H8zM12 4.800h2.600v2.600H12zM15.600 4.800h1.800v2.600h-1.800zM4 9h2.600v2.600H4zM8 9h2.600v2.600H8zM12 9h2.600v2.600H12zM15.600 9h1.800v2.600h-1.800zM4 13.400h2.600V16H4zM8 13.400h2.600V16H8zM12 13.400h2.600V16H12z" fill="#006ce0"/></svg></span></div>
      <div class="pick d-flex align-items-center tx" style="width:210px;margin-left:12px;padding-left:18px;letter-spacing:.2px">UTC timezone<svg style="margin-left:16px;color:#006ce0" width="16" height="12"><use href="#tri"/></svg></div>
      <div class="refresh d-flex align-items-center" style="margin-left:12px;color:#006ce0">
        <svg style="margin-left:14px" width="25" height="24" viewBox="0 0 25 24"><path d="M22.800 14A10.300 10.300 0 1 1 21 6l2 2.500" fill="none" stroke="#006ce0" stroke-width="2.800"/><path d="M23.600 0v9h-9" fill="none" stroke="#006ce0" stroke-width="2.800"/></svg>
        <div style="width:3px;height:46px;background:#006ce0;margin:0 13px 0 9px"></div><svg width="16" height="12"><use href="#tri"/></svg>
      </div>
      <svg style="margin:0 0 5px 27px" width="24" height="24" viewBox="0 0 24 24"><path d="M1 1l22 22M23 1L1 23" stroke="#424650" stroke-width="2.700"/></svg>
    </div>
  </div>
  <div class="chart-card">
    <svg id="chart" width="1918" height="704" viewBox="121 388 1918 704"></svg>
    <div class="legend-row d-flex align-items-center">
      <div class="d-flex align-items-center"><i class="dot" style="background:#1f77b4"></i><span class="tx" style="letter-spacing:-.3px">NetworkIn</span></div>
      <div class="d-flex align-items-center"><i class="dot" style="background:#ff7f0e"></i><span class="tx" style="letter-spacing:-.1px">CPUUtilization</span></div>
      <div class="d-flex align-items-center"><i class="dot" style="background:#2ca02c"></i><span class="tx" style="letter-spacing:-.18px">NetworkOut</span></div>
      <div class="d-flex align-items-center"><i class="dot" style="background:#d62728"></i><span class="tx" style="letter-spacing:-.18px">EBSReadBytes</span></div>
    </div>
  </div>
  <div class="dlg-foot d-flex justify-content-end">
    <div class="pill d-flex align-items-center justify-content-center" style="width:249px;padding-left:5px"><span class="tx" style="letter-spacing:-.1px">View in metrics</span><svg style="margin-left:14px" width="22" height="22" viewBox="0 0 22 22"><path d="M9 1.500H1.500v19h19V14M13 1.500h7.500V9M20 2L10.500 11.500" fill="none" stroke="#006ce0" stroke-width="2.800"/></svg></div>
    <div class="pill d-flex align-items-center justify-content-center" style="width:119px"><span class="tx" style="letter-spacing:-.3px">Close</span></div>
  </div>
</div>

<script>
// Axes, grid and series of the metric graph
const yLabels = ["45.0M","40.0M","35.0M","30.0M","25.0M","20.0M","15.0M","10.0M","5.00M","0"];
const xLabels = ["05:15","05:30","05:45","06:00","06:15","06:30","06:45","07:00","07:15","07:30","07:45","08:00"];
let out = '<text x="144" y="491" style="font-size:18px;letter-spacing:-.34px;fill:#505258">Various units</text>';
yLabels.forEach((t, i) => {
  const y = 527 + i * 57.3;
  const thin = i === 0 || i === 3 || i === 6 || i === 9;
  out += `<path d="M193 ${thin ? Math.round(y) + .5 : Math.round(y)}H1994" stroke="#ececec" stroke-width="${thin ? 1 : 2}"/><text x="188.300" y="${y + 6}" text-anchor="end">${t}</text>`;
});
xLabels.forEach((t, i) => {
  const x = 250.1 + i * 149.5;
  out += `<path d="M${x} 1044V1052" stroke="#e6e6e6" stroke-width="1.300"/><text x="${x}" y="1076.500" text-anchor="middle" style="letter-spacing:.2px">${t}</text>`;
});
out += '<path d="M200 1043.500H1994" stroke="#cbcccc" stroke-width="3"/><path d="M1595 1043.500H1645" stroke="#4a9c2c" stroke-width="3"/><path d="M1645 1043.500H1845" stroke="#c0392b" stroke-width="3"/><path d="M1595.500 524L1645 1043" fill="none" stroke="#d62728" stroke-width="2"/>';
document.getElementById("chart").innerHTML = out;
</script>
</body>
</html>
